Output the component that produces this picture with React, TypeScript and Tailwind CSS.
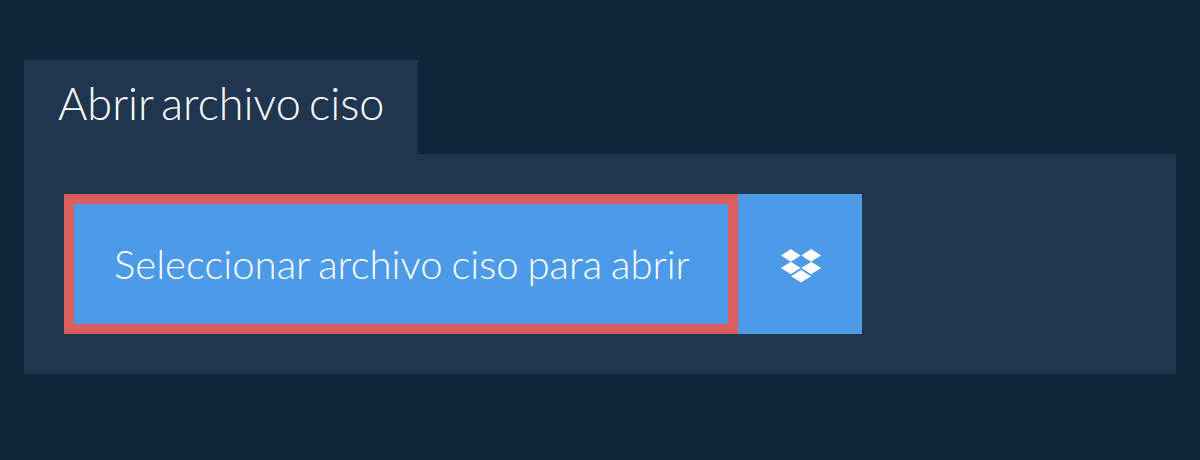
function DropboxIcon() {
  return (
    <svg viewBox="0 0 40 34" className="h-[34px] w-10" fill="#fff">
      <polygon points="0,6.4 9.8,0 19.6,6.4 9.8,12.7" />
      <polygon points="20.4,6.4 30.2,0 40,6.4 30.2,12.7" />
      <polygon points="0,19 9.8,12.7 19.6,19 9.8,25.3" />
      <polygon points="20.4,19 30.2,12.7 40,19 30.2,25.3" />
      <polygon points="10,27.3 20,21 30,27.3 20,33.6" />
    </svg>
  );
}

export default function App() {
  return (
    <div className="h-[460px] w-[1200px] bg-[#0f253a] px-6 pt-[60px] font-['Lato',sans-serif] font-light text-white">
      <div className="h-[94px] w-[394px] bg-[#20364f] pl-[34px] pt-[15px]">
        <h1 className="text-[45px] leading-[56px] [word-spacing:-4px]">Abrir archivo ciso</h1>
      </div>
      <div className="bg-[#20364f] p-10">
        <div className="flex h-[140px]">
          <button className="w-[674px] border-[10px] border-[#dd5e5e] bg-[#4c9ae8] pl-[40px] text-left text-[40.1px] font-light whitespace-nowrap [word-spacing:-2px]">
            Seleccionar archivo ciso para abrir
          </button>
          <button className="flex w-[124px] items-center justify-center bg-[#4c9ae8] pt-1 pl-[2px]">
            <DropboxIcon />
          </button>
        </div>
      </div>
    </div>
  );
}
